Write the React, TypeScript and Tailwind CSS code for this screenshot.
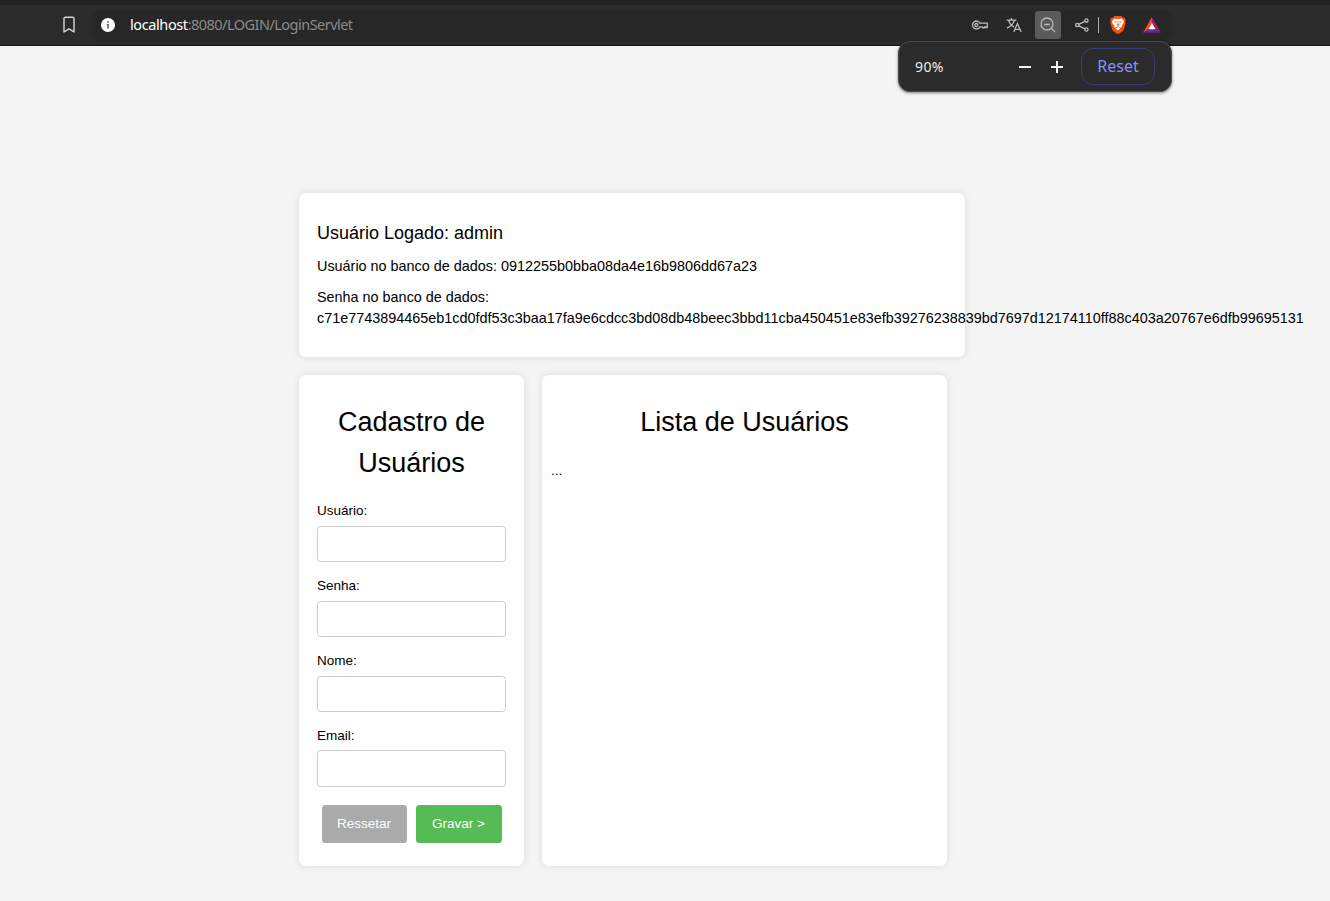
import React from "react";

const FIELDS = ["Usuário:", "Senha:", "Nome:"];
const HASH =
  "c71e7743894465eb1cd0fdf53c3baa17fa9e6cdcc3bd08db48beec3bbd11cba450451e83efb39276238839bd7697d12174110ff88c403a20767e6dfb99695131";

function BookmarkIcon() {
  return (
    <svg width="14" height="18" viewBox="0 0 14 18" fill="none" stroke="#d6d6d6" strokeWidth="1.4" strokeLinejoin="round">
      <path d="M2 2.6Q2 1.2 3.4 1.2H10.6Q12 1.2 12 2.6V16L7 12.8L2 16Z" />
    </svg>
  );
}

function InfoIcon() {
  return (
    <svg width="14" height="14" viewBox="0 0 14 14">
      <circle cx="7" cy="7" r="7" fill="#fff" />
      <path d="M6.2 3.2h1.6v1.5H6.2zM5.8 6h2v4.5H6.3V7H5.8z" fill="#5a5a5a" />
    </svg>
  );
}

function KeyIcon() {
  return (
    <svg width="18" height="12" viewBox="0 0 18 12" fill="none" stroke="#bcbcbc" strokeWidth="1.3" strokeLinejoin="round">
      <path d="M9 4.1H16.3V8.6H14.9V7.9H13.5V8.9H11.6V7.9H9A4 4 0 1 1 9 4.1Z" />
      <circle cx="5.4" cy="6" r="1.5" />
    </svg>
  );
}

function TranslateIcon() {
  return (
    <svg width="16" height="16" viewBox="0 0 16 16" fill="none" stroke="#bcbcbc" strokeWidth="1.3">
      <path d="M.6 3.2H10.4M5.4 1V3.2M2.7 3.4C3.6 6.7 5.3 8.6 8 10M8.4 3.4C7.2 7.2 4.4 9.8 .9 11.2" />
      <path d="M7.8 14.9L11.4 6.6L15.2 14.9M9 12.3H14" />
    </svg>
  );
}

function ZoomOutIcon() {
  return (
    <svg width="16" height="16" viewBox="0 0 16 16" fill="none" stroke="#b8b8b8" strokeWidth="1.3">
      <circle cx="7" cy="7" r="6" />
      <path d="M4.2 7.5H9.8M11.2 11.2L15.1 15.1" />
    </svg>
  );
}

function ShareIcon() {
  return (
    <svg width="14" height="14" viewBox="0 0 14 14" fill="none" stroke="#bcbcbc" strokeWidth="1.3">
      <circle cx="2.3" cy="7" r="1.65" />
      <circle cx="11.4" cy="2.6" r="1.65" />
      <circle cx="11.4" cy="11.5" r="1.65" />
      <path d="M3.8 6.3L9.9 3.3M3.8 7.8L9.9 10.8" />
    </svg>
  );
}

function LionIcon() {
  return (
    <svg width="16" height="18" viewBox="0 0 16 18">
      <path d="M4.5 0H11.5L13.1 1.7L14.7 1.8L15.8 4L15.3 5.5L15.6 7L13.8 13.5Q13.3 14.9 12 15.8L8.9 17.8Q8 18.2 7.1 17.8L4 15.8Q2.7 14.9 2.2 13.5L.4 7L.7 5.5L.2 4L1.3 1.8L2.9 1.7Z" fill="#fb500b" />
      <path d="M4.2 2.5L6.6 3L8 2.7L9.4 3L11.8 2.5L14 5.2L13.4 7.5L11.6 9.8L11.8 11.6L9.9 11.2L8 10.2L6.1 11.2L4.2 11.6L4.4 9.8L2.6 7.5L2 5.2Z" fill="#fff" />
      <path d="M4 5.2L6.6 5.8L6 6.9ZM12 5.2L9.4 5.8L10 6.9ZM7.6 5H8.4L8.3 8L9.6 8.9L8 9.7L6.4 8.9L7.7 8Z" fill="#fb500b" />
      <path d="M5.6 12.3L8 11L10.4 12.3L8 14.4Z" fill="#fff" />
    </svg>
  );
}

function TriangleIcon() {
  return (
    <svg width="18" height="16" viewBox="0 0 18 16">
      <path d="M9 0L0 15.7L5.7 12.1L9 6.3Z" fill="#ff4724" />
      <path d="M9 0L18 15.7L12.3 12.1L9 6.3Z" fill="#9e1f63" />
      <path d="M0 15.7H18L12.3 12.1H5.7Z" fill="#662d91" />
      <path d="M9 5.9L12.6 12.3H5.4Z" fill="#fff" />
    </svg>
  );
}

function BrowserBar() {
  return (
    <header className="relative h-[46px] border-t-[5px] border-b border-t-[#222222] border-b-[#151515] bg-[#2b2b2b] font-['Noto_Sans',sans-serif]">
      <div className="flex h-10 items-center pl-[62px]">
        <BookmarkIcon />
        <div className="ml-4 flex h-8 w-[1080px] items-center rounded-[9px] bg-[#272727] pl-[9px]">
          <InfoIcon />
          <span className="ml-[15px] w-[222px] pb-[2px] text-[14.5px] leading-5 tracking-[-0.53px] whitespace-nowrap text-[#8b8b8b]">
            <span className="tracking-[-0.4px] text-white">localhost</span>:8080/LOGIN/LoginServlet
          </span>
          <div className="ml-[619px] flex items-center">
            <KeyIcon />
            <span className="ml-[17px]"><TranslateIcon /></span>
            <span className="ml-[13px] flex h-7 w-[26px] items-center justify-center rounded-[3px] bg-[#5b5b5b]"><ZoomOutIcon /></span>
            <span className="ml-[14px]"><ShareIcon /></span>
            <span className="ml-[9px] h-4 w-px bg-[#b0b0b0]" />
            <span className="ml-[11px]"><LionIcon /></span>
            <span className="ml-[17px]"><TriangleIcon /></span>
          </div>
        </div>
      </div>
      <div className="absolute top-9 left-[898px] z-10 flex h-[51px] w-[274px] items-center rounded-[12px] border border-[#494950] bg-[#2b2b2b] pl-4 shadow-[0_1px_3px_rgba(0,0,0,0.5)]">
        <span className="w-[90px] text-[14px] leading-5 tracking-[0.4px] text-[#eeeeee]">90%</span>
        <svg className="ml-[14px]" width="12" height="12" viewBox="0 0 12 12"><path d="M0 6H12" stroke="#f4f4f4" strokeWidth="2" /></svg>
        <svg className="ml-5" width="12" height="12" viewBox="0 0 12 12"><path d="M0 6H12M6 0V12" stroke="#f4f4f4" strokeWidth="2" /></svg>
        <button className="ml-[18px] h-[37px] w-[74px] rounded-[12px] border border-[#3b3c76] pb-[2px] text-[16px] leading-5 tracking-[0px] text-[#8491f6]">Reset</button>
      </div>
    </header>
  );
}

export default function App() {
  return (
    <div className="h-[901px] w-[1330px] overflow-hidden bg-[#f4f4f4] font-['Liberation_Sans',sans-serif] text-black">
      <BrowserBar />
      <main className="ml-[299px] flex flex-col gap-[18px] pt-[147px]">
        <section className="h-[164px] w-[666px] rounded-[7px] bg-[#fefefe] px-[18px] pt-[27px] shadow-[0_0_9px_rgba(0,0,0,0.1)]">
          <h2 className="text-[18px] leading-[27px]">Usuário Logado: admin</h2>
          <p className="mt-[9px] text-[14.4px] leading-[21.6px]">Usuário no banco de dados: 0912255b0bba08da4e16b9806dd67a23</p>
          <p className="mt-[9px] text-[14.4px] leading-[21.6px]">
            Senha no banco de dados:
            <br />
            <span className="whitespace-nowrap">{HASH}</span>
          </p>
        </section>
        <div className="flex h-[491px] gap-[18px]">
          <section className="w-[225px] rounded-[7px] bg-[#fefefe] px-[18px] pt-[27px] shadow-[0_0_9px_rgba(0,0,0,0.1)]">
            <h1 className="text-center text-[27px] leading-[40.5px]">Cadastro de Usuários</h1>
            <form className="mt-[18px]">
              {FIELDS.map((label) => (
                <label key={label} className="mb-[18px] block h-[57px] text-[13.5px] leading-5">
                  <span className="block h-[25px]">{label}</span>
                  <input className="block h-[36px] w-full rounded-[3.5px] border border-[#cccccc] bg-white outline-none" />
                </label>
              ))}
              <label className="mb-[18px] block h-[56px] text-[13.5px] leading-5">
                <span className="block h-[24px]">Email:</span>
                <input className="block h-[37px] w-full rounded-[3.5px] border border-[#cccccc] bg-white outline-none" />
              </label>
              <div className="flex justify-center gap-[9px] pt-[5px] text-[13.5px] text-[#fefefe]">
                <button type="reset" className="h-[38px] w-[85px] rounded-[3.5px] bg-[#aaaaaa]">Ressetar</button>
                <button type="button" className="h-[38px] w-[86px] rounded-[3.5px] bg-[#55bb55]">Gravar &gt;</button>
              </div>
            </form>
          </section>
          <section className="w-[405px] rounded-[7px] bg-[#fefefe] px-[9px] pt-[27px] shadow-[0_0_9px_rgba(0,0,0,0.1)]">
            <h1 className="text-center text-[27px] leading-[40.5px]">Lista de Usuários</h1>
            <p className="mt-[18px] text-[13.5px] leading-5">...</p>
          </section>
        </div>
      </main>
    </div>
  );
}
